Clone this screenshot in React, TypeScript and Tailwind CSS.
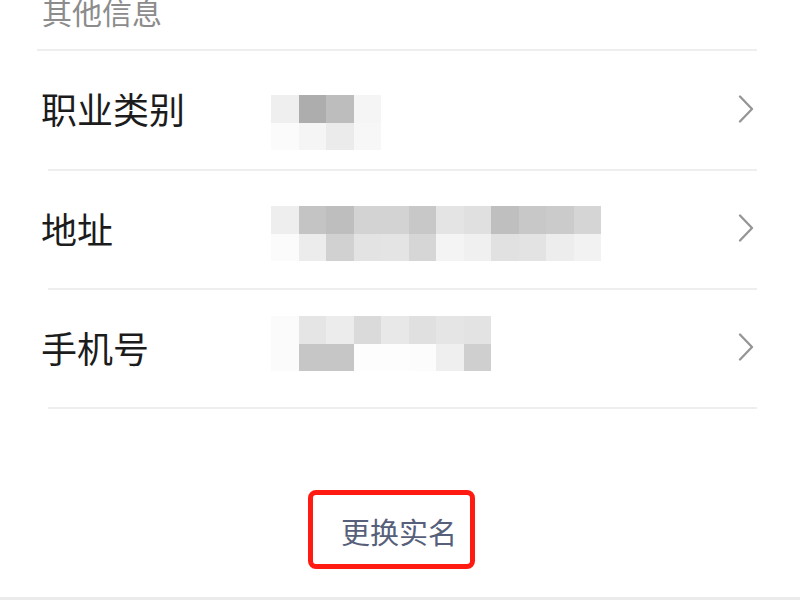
import React from "react";

type Row = {
  label: string;
  h: string;
  mt: string;
  cells: string[][];
};

const rows: Row[] = [
  {
    label: "职业类别",
    h: "h-[118px]",
    mt: "mt-[44px]",
    cells: [
      ["#efefef", "#adadad", "#bdbdbd", "#f5f5f5"],
      ["#fbfbfb", "#f5f5f5", "#ebebeb", "#f7f7f7"],
    ],
  },
  {
    label: "地址",
    h: "h-[117px]",
    mt: "mt-[35px]",
    cells: [
      ["#eeeeee", "#c4c4c4", "#bebebe", "#d3d3d3", "#d3d3d3", "#c8c8c8", "#e4e4e4", "#e0e0e0", "#bfbfbf", "#c8c8c8", "#cbcbcb", "#d5d5d5"],
      ["#fbfbfb", "#ececec", "#d1d1d1", "#e3e3e3", "#e4e4e4", "#d6d6d6", "#f4f4f4", "#f0f0f0", "#e1e1e1", "#e3e3e3", "#ededed", "#f2f2f2"],
    ],
  },
  {
    label: "手机号",
    h: "h-[117px]",
    mt: "mt-[26px]",
    cells: [
      ["#fbfbfb", "#e5e5e5", "#ececec", "#dadada", "#e8e8e8", "#e0e0e0", "#e5e5e5", "#e3e3e3"],
      ["#fbfbfb", "#c6c6c6", "#c6c6c6", "#fdfdfd", "#fdfdfd", "#fcfcfc", "#efefef", "#cfcfcf"],
    ],
  },
];

function Chevron() {
  return (
    <svg width="16" height="28" viewBox="0 0 16 28" fill="none">
      <path d="M2 1.5 L14 14 L2 26.5" stroke="#959595" strokeWidth="2.3" strokeLinecap="round" strokeLinejoin="round" />
    </svg>
  );
}

export default function App() {
  return (
    <div
      className="w-[800px] h-[600px] bg-white overflow-hidden flex flex-col"
      style={{ fontFamily: '"Noto Sans CJK SC", "Noto Sans", sans-serif' }}
    >
      <div className="h-[49px] pl-[42px] overflow-hidden">
        <div className="text-[30px] leading-none text-[#8c8c8c] -mt-[4px]">其他信息</div>
      </div>
      <div className="ml-[37px] mr-[43px] h-[2px] bg-[#eeeeee]" />
      {rows.map((r) => (
        <React.Fragment key={r.label}>
          <div className={`${r.h} flex items-center pl-[41px] pr-[46px]`}>
            <div className="w-[230px] text-[36px] leading-none text-[#1c1c1c] -mt-[4px]">{r.label}</div>
            <div className={`self-start ${r.mt} flex flex-col`}>
              {r.cells.map((line, i) => (
                <div key={i} className="flex">
                  {line.map((c, j) => (
                    <div key={j} className="w-[27.5px] h-[27.5px]" style={{ backgroundColor: c }} />
                  ))}
                </div>
              ))}
            </div>
            <div className="ml-auto -mt-[3px]">
              <Chevron />
            </div>
          </div>
          <div className="ml-[48px] mr-[43px] h-[2px] bg-[#eeeeee]" />
        </React.Fragment>
      ))}
      <div className="mt-[81px] flex pl-[308px]">
        <div className="border-[5px] border-[#ff1a12] rounded-[8px] w-[167px] h-[79px] pl-[28px] pt-[22px]">
          <div className="text-[29px] leading-none text-[#57607a]">更换实名</div>
        </div>
      </div>
      <div className="mt-auto h-[3px] bg-[#ebebeb]" />
    </div>
  );
}
